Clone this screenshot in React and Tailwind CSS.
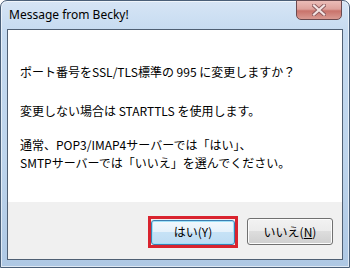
export default function App() {
  return (
    <div className="w-[350px] h-[268px] bg-white overflow-hidden">
      <div className="w-full h-full flex flex-col rounded-t-[7px] border border-[#4a5f78] bg-[linear-gradient(180deg,#d6e5f5_0%,#c5daf0_12%,#bdd4ec_60%,#aec8e4_100%)] shadow-[inset_0_0_0_1px_rgba(255,255,255,0.6)]">
        <div className="h-[28px] shrink-0 flex items-start justify-between pl-[8px] pr-[7px]">
          <span className="mt-[6px] text-[12px] leading-[16px] text-black font-['Noto_Sans',sans-serif]">
            Message from Becky!
          </span>
          <button className="mt-[-1px] w-[46px] h-[20px] rounded-b-[5px] border border-[#6b4a4f] bg-[linear-gradient(180deg,#ebbcb7_0%,#dea29c_45%,#c9736b_55%,#d99a92_100%)] flex items-center justify-center">
            <svg width="14" height="12" viewBox="0 0 14 12">
              <path d="M2 1.5 L12 10.5 M12 1.5 L2 10.5" stroke="#8c5a5d" strokeWidth="4" strokeLinecap="square" />
              <path d="M2 1.5 L12 10.5 M12 1.5 L2 10.5" stroke="#f3e4e3" strokeWidth="2.2" strokeLinecap="square" />
            </svg>
          </button>
        </div>
        <div className="flex-1 mx-[6px] mb-[7px] border border-[#4f5f73] flex flex-col bg-[#f0f0f0]">
          <div className="h-[172px] bg-white pl-[12px] pt-[33px] text-[12px] leading-[18px] text-black font-['Noto_Sans_CJK_JP',sans-serif]">
            <p>ポート番号をSSL/TLS標準の 995 に変更しますか？</p>
            <p className="mt-[21px]">変更しない場合は STARTTLS を使用します。</p>
            <p className="mt-[16px]">通常、POP3/IMAP4サーバーでは「はい」、</p>
            <p>SMTPサーバーでは「いいえ」を選んでください。</p>
          </div>
          <div className="flex-1 flex items-start justify-end gap-[9px] pr-[9px] pt-[14px]">
            <div className="border-[3px] border-[#d9232e] p-0">
              <button className="w-[84px] h-[25px] rounded-[3px] border border-[#3c7fb1] bg-[linear-gradient(180deg,#f2f8fc_0%,#e5f1fb_49%,#c6e2f6_50%,#bedcf3_100%)] shadow-[inset_0_0_0_1px_#9fe0f8] text-[12px] text-black font-['Noto_Sans_CJK_JP',sans-serif]">
                はい(Y)
              </button>
            </div>
            <button className="mt-[2px] w-[86px] h-[27px] rounded-[3px] border border-[#707070] bg-[linear-gradient(180deg,#f2f2f2_0%,#ebebeb_49%,#dddddd_50%,#cfcfcf_100%)] shadow-[inset_0_0_0_1px_#fcfcfc] text-[12px] text-black font-['Noto_Sans_CJK_JP',sans-serif]">
              いいえ(<span className="underline">N</span>)
            </button>
          </div>
        </div>
      </div>
    </div>
  );
}
